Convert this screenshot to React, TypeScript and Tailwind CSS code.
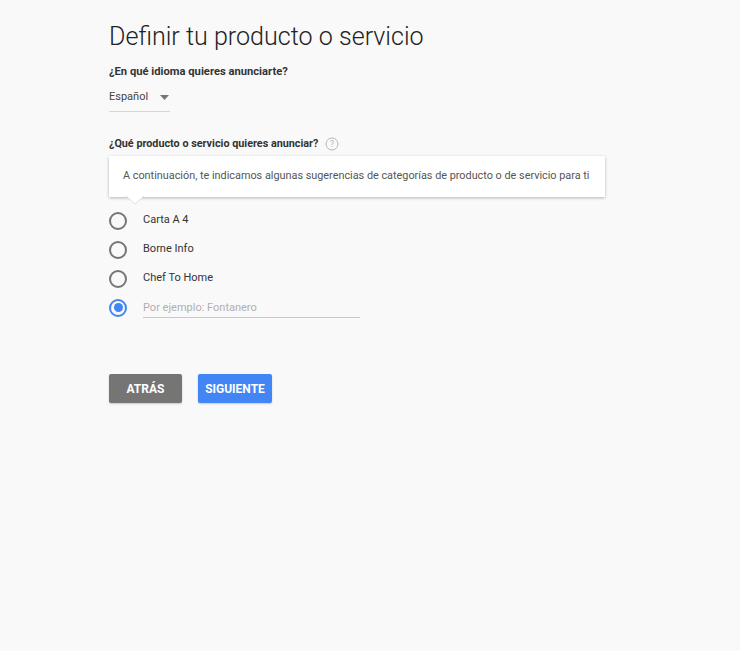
import React, { useState } from 'react';

const options = ['Carta A 4', 'Borne Info', 'Chef To Home'];

const Radio = ({ checked }: { checked: boolean }) => (
  <span
    className={`w-[18px] h-[18px] rounded-full border-2 flex items-center justify-center shrink-0 ${
      checked ? 'border-[#4285f4]' : 'border-[#757575]'
    }`}
  >
    {checked && <span className="w-[9px] h-[9px] rounded-full bg-[#4285f4]" />}
  </span>
);

export default function App() {
  const [selected, setSelected] = useState(3);

  return (
    <div className="w-[740px] h-[651px] bg-[#f9f9f9] font-['Roboto',sans-serif] text-[#212121]">
      <div className="pl-[109px] pt-[19px]">
        <h1 className="text-[25.1px] font-light leading-[36px] text-[#222]">Definir tu producto o servicio</h1>

        <p className="mt-[10px] text-[11.2px] font-bold leading-[14px] text-[#333]">¿En qué idioma quieres anunciarte?</p>
        <div className="mt-[10px] w-[61px] h-[23px] border-b border-[#d6d6d6] flex items-start justify-between">
          <span className="text-[11px] leading-[16px] text-[#444]">Español</span>
          <svg width="9" height="5" viewBox="0 0 9 5" className="mt-[6px] mr-[1px]">
            <path d="M0 0h9L4.5 5z" fill="#757575" />
          </svg>
        </div>

        <div className="mt-[25px] flex items-center gap-[7px]">
          <p className="text-[10.8px] font-bold leading-[14px] text-[#333]">¿Qué producto o servicio quieres anunciar?</p>
          <svg width="14" height="14" viewBox="0 0 14 14">
            <circle cx="7" cy="7" r="6" fill="none" stroke="#b5b5b5" strokeWidth="1" />
            <text x="7" y="10" textAnchor="middle" fontSize="8.5" fill="#b5b5b5" fontFamily="Roboto, sans-serif">?</text>
          </svg>
        </div>

        <div className="relative mt-[5px] w-[496px]">
          <div className="bg-white h-[41px] flex items-center pl-[14px] shadow-[0_1px_3px_rgba(0,0,0,0.28)]">
            <span className="text-[10.85px] text-[#555]">
              A continuación, te indicamos algunas sugerencias de categorías de producto o de servicio para ti
            </span>
          </div>
          <svg width="18" height="9" viewBox="0 0 18 9" className="absolute left-[17px] top-[40px]">
            <path d="M0 0L9 8L18 0" fill="#fff" stroke="#e0e0e0" strokeWidth="1" />
          </svg>
        </div>

        <div className="mt-[9px] flex flex-col">
          {options.map((o, i) => (
            <div key={o} className="h-[29px] flex items-center gap-[16px] cursor-pointer" onClick={() => setSelected(i)}>
              <Radio checked={selected === i} />
              <span className="text-[11px] text-[#333]">{o}</span>
            </div>
          ))}
          <div className="h-[29px] flex items-center gap-[16px]" onClick={() => setSelected(3)}>
            <Radio checked={selected === 3} />
            <input
              placeholder="Por ejemplo: Fontanero"
              className="w-[217px] h-[20px] border-b border-[#c8c8c8] bg-transparent text-[11px] text-[#333] placeholder:text-[#b0b0b0] outline-none"
            />
          </div>
        </div>

        <div className="mt-[52px] flex gap-[16px]">
          <button className="w-[73px] h-[29px] rounded-[2px] bg-[#757575] text-white text-[12px] font-bold shadow-[0_1px_2px_rgba(0,0,0,0.2)]">
            ATRÁS
          </button>
          <button className="w-[74px] h-[29px] rounded-[2px] bg-[#4285f4] text-white text-[12px] font-bold shadow-[0_1px_2px_rgba(0,0,0,0.2)]">
            SIGUIENTE
          </button>
        </div>
      </div>
    </div>
  );
}
